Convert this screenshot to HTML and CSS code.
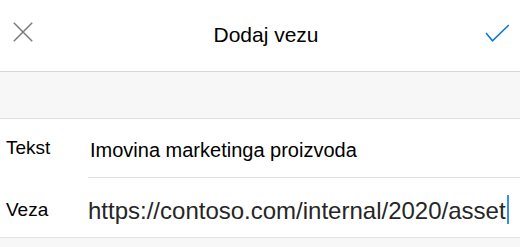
FILE: index.html
```html
<!DOCTYPE html>
<html lang="hr">
<head>
<meta charset="utf-8">
<title>Dodaj vezu</title>
<link rel="stylesheet" href="styles.css">
</head>
<body>
<header class="bar">
  <svg class="icon-close" width="20" height="20" viewBox="0 0 20 20" aria-label="Zatvori">
    <path d="M0.8 0.8 L19.2 19.2 M19.2 0.8 L0.8 19.2" stroke="#7a7a7a" stroke-width="1.5" fill="none"/>
  </svg>
  <h1 class="title">Dodaj vezu</h1>
  <svg class="icon-check" width="25" height="18" viewBox="0 0 25 18" aria-label="Gotovo">
    <path d="M1 9 L7.5 16.8 L23.8 1" stroke="#0f78d4" stroke-width="1.6" fill="none"/>
  </svg>
</header>
<div class="band"></div>
<div class="form">
  <div class="row row-text">
    <div class="label">Tekst</div>
    <div class="value value-text">Imovina marketinga proizvoda</div>
  </div>
  <div class="row row-link">
    <div class="label">Veza</div>
    <div class="value value-link">https://contoso.com/internal/2020/asset<span class="caret"></span></div>
  </div>
</div>
<div class="footer-band"></div>
</body>
</html>
```

FILE: styles.css
```css
html, body {
  margin: 0;
  padding: 0;
  background: #ffffff;
  font-family: "Liberation Sans", Arial, sans-serif;
  color: #000;
  overflow: hidden;
}

.bar {
  display: flex;
  align-items: flex-start;
  height: 71px;
  border-bottom: 1px solid #d6d6d6;
  box-sizing: content-box;
}

.icon-close {
  display: block;
  margin-top: 22px;
  margin-left: 13px;
  flex: none;
}

.title {
  flex: 1;
  margin: 23px 0 0 0;
  padding-left: 14px;
  text-align: center;
  font-size: 21px;
  font-weight: normal;
  line-height: 24px;
  color: #000;
}

.icon-check {
  display: block;
  flex: none;
  margin-top: 24px;
  margin-right: 10px;
}

.band {
  height: 46px;
  background: #f7f7f7;
  border-bottom: 1px solid #e0e0e0;
}

.row {
  display: flex;
}

.label {
  width: 82px;
  flex: none;
  padding-left: 6px;
  font-size: 19px;
  line-height: 22px;
}

.value {
  flex: 1;
  min-width: 0;
  white-space: nowrap;
}

.row-text .label {
  padding-top: 18px;
}

.value-text {
  height: 58px;
  box-sizing: border-box;
  padding-top: 20px;
  padding-left: 2px;
  font-size: 20px;
  line-height: 23px;
  border-bottom: 1px solid #e0e0e0;
  box-sizing: content-box;
  height: 38px;
}

.row-link {
  height: 59px;
  border-bottom: 1px solid #e3e3e3;
}

.row-link .label {
  padding-top: 21px;
}

.value-link {
  padding-top: 17px;
  font-size: 24px;
  line-height: 28px;
  color: #262626;
}

.caret {
  display: inline-block;
  width: 2px;
  height: 29px;
  background: #3a8ee6;
  vertical-align: -5px;
  margin-left: 1px;
}

.footer-band {
  height: 20px;
  background: #f7f7f7;
}
```
